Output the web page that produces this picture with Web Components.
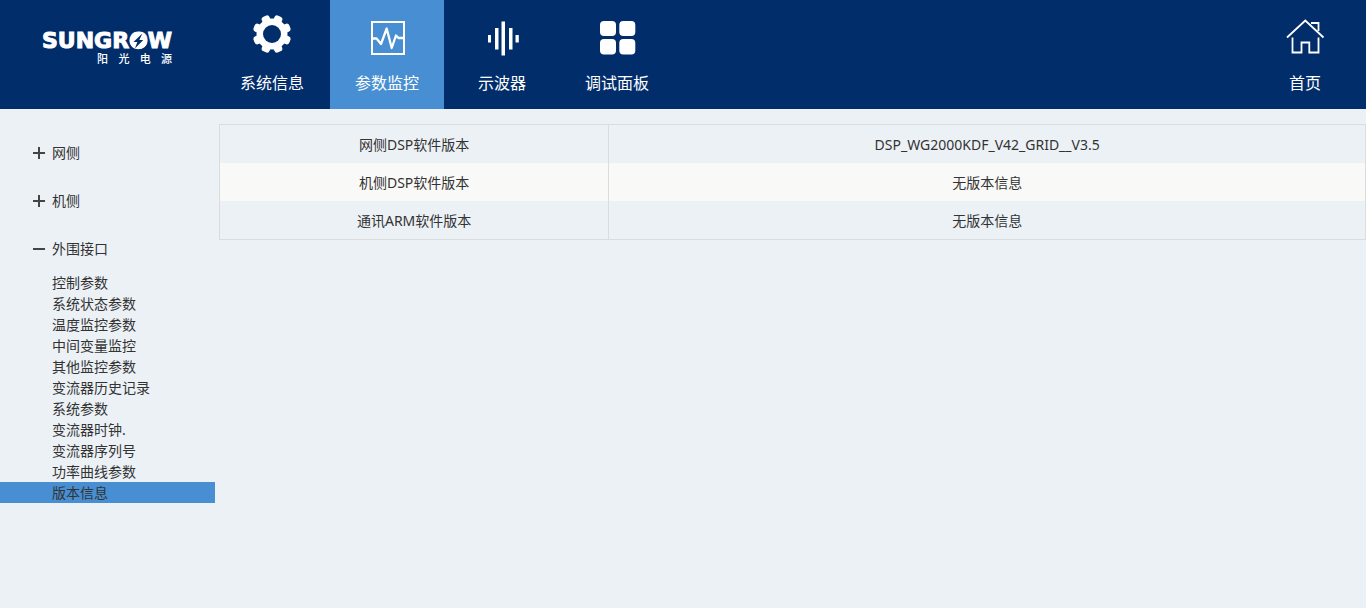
<!DOCTYPE html>
<html lang="zh-CN">
<head>
<meta charset="utf-8">
<meta name="viewport" content="width=device-width, initial-scale=1">
<title>阳光电源 - 参数监控</title>
<style>
  :root {
    --navy: #012d6b;
    --blue: #478fd2;
    --page: #ecf1f6;
    --line: #dadcde;
    --text: #333;
  }
  body {
    margin: 0;
    background: var(--page);
    color: var(--text);
    font: 14px/21px "Noto Sans", "Noto Sans CJK SC", sans-serif;
  }
</style>
</head>
<body>
<sg-app></sg-app>

<script>
const define = (name, html) => {
  const template = document.createElement('template');
  template.innerHTML = html;
  customElements.define(name, class extends HTMLElement {
    constructor() {
      super();
      this.attachShadow({ mode: 'open' }).append(template.content.cloneNode(true));
    }
  });
};

/* Brand mark: word, bolt inside the O, Chinese name below */
define('sg-logo', `
  <style>
    :host { display: block; color: #fff; }
    a { display: flex; flex-direction: column; width: max-content; color: inherit; text-decoration: none; }
    .word { font: bold 22px/24px "DejaVu Sans", sans-serif; -webkit-text-stroke: 1px #fff; }
    .o { position: relative; display: inline-block; }
    svg { position: absolute; inset: 0; width: 100%; height: 100%; }
    .cn { align-self: flex-end; width: 75px; font-size: 11px; line-height: 12px; font-weight: 500; text-align-last: justify; }
  </style>
  <a href="#home">
    <span class="word">SUNGR<span class="o">O<svg viewBox="0 0 19 24" aria-hidden="true"><ellipse cx="9.5" cy="12" rx="9" ry="8.5" fill="#fff"/><path d="M13.500 4.500 4.500 13h4L6 19.500 14.500 11h-4z" fill="#012d6b"/></svg></span>W</span>
    <span class="cn">阳 光 电 源</span>
  </a>`);

/* Icon and label link of the top bar */
const icons = {
  gear: `<mask id="m"><rect x="-4" y="-4" width="48" height="48" fill="#fff"/><circle cx="20" cy="17" r="9"/></mask>
    <g mask="url(#m)" fill="#fff"><circle cx="20" cy="17" r="15.5"/>
    ${[22.5, 67.5, 112.5, 157.5].map(a => `<rect x="15.800" y="-2.300" width="8.400" height="38.600" rx="3" transform="rotate(${a} 20 17)"/>`).join('')}</g>`,
  pulse: `<g fill="none" stroke="#fff"><rect x="5" y="5" width="32" height="32" stroke-width="2"/>
    <path d="M5 21.500h4.500L14 27l5.700-15.500 5 19.500L29 18.500l2.500 2.500H37" stroke-width="2.300" stroke-linejoin="round"/></g>`,
  wave: `<path fill="#fff" d="M6 18h3v7.500H6zM13 11h3.500v21.500H13zM19.500 4.500h3.500v34h-3.500zM27 11h3.500v21.500H27zM33.500 18h3.300v7.500h-3.300z"/>`,
  grid: `<g fill="#fff"><rect x="3" y="4" width="16" height="15" rx="4"/><rect x="22.300" y="4" width="16" height="15" rx="4"/>
    <rect x="3" y="22" width="16" height="15.500" rx="4"/><rect x="22.300" y="22" width="16" height="15.500" rx="4"/></g>`,
  home: `<path fill="none" stroke="#fff" stroke-width="1.800" d="M2 20.500 20.300 3.500 38.500 20.500M7.500 20.500v15h9V25.500h7.800v10h9.200v-15M26 6h7.500v8"/>`
};
customElements.define('sg-nav-item', class extends HTMLElement {
  connectedCallback() {
    if (this.shadowRoot) return;
    const icon = this.getAttribute('icon');
    this.attachShadow({ mode: 'open' }).innerHTML = `
      <style>
        :host { display: block; width: 114px; color: #fff; }
        :host([active]) { background: var(--blue); }
        a { display: flex; flex-direction: column; align-items: center; gap: 14px; padding: 17px 0 14px;
            color: inherit; text-decoration: none; font-size: 16px; line-height: 24px; }
        svg { width: 40px; height: 40px; overflow: visible; }
      </style>
      <a href="#${icon}"><svg viewBox="0 0 40 40" aria-hidden="true">${icons[icon]}</svg><slot></slot></a>`;
  }
});

define('sg-topbar', `
  <style>
    :host { display: block; background: var(--navy); }
    header { display: grid; grid-template-columns: 215px 1fr auto; align-items: start; padding-right: 4px; }
    sg-logo { padding: 29px 0 0 42px; }
    nav { display: flex; gap: 1px; }
  </style>
  <header>
    <sg-logo></sg-logo>
    <nav>
      <sg-nav-item icon="gear">系统信息</sg-nav-item>
      <sg-nav-item icon="pulse" active>参数监控</sg-nav-item>
      <sg-nav-item icon="wave">示波器</sg-nav-item>
      <sg-nav-item icon="grid">调试面板</sg-nav-item>
    </nav>
    <sg-nav-item icon="home">首页</sg-nav-item>
  </header>`);

/* Collapsible group of the side menu */
customElements.define('sg-menu-group', class extends HTMLElement {
  connectedCallback() {
    if (this.shadowRoot) return;
    this.attachShadow({ mode: 'open' }).innerHTML = `
      <style>
        :host { display: block; }
        button { display: flex; align-items: center; gap: 7px; width: 100%; height: 48px; padding: 0 0 0 33px;
                 border: 0; background: none; color: inherit; font: inherit; text-align: left; cursor: pointer; }
        svg { width: 12px; height: 14px; stroke: #444; stroke-width: 2; }
        :host([open]) .v { display: none; }
        :host(:not([open])) .items { display: none; }
      </style>
      <button type="button"><svg viewBox="0 0 12 14" aria-hidden="true"><path d="M0 8h12"/><path class="v" d="M6 2v12"/></svg><slot name="title"></slot></button>
      <div class="items"><slot></slot></div>`;
    const button = this.shadowRoot.querySelector('button');
    const sync = () => button.setAttribute('aria-expanded', this.hasAttribute('open'));
    button.addEventListener('click', () => { this.toggleAttribute('open'); sync(); });
    sync();
  }
});

define('sg-menu-item', `
  <style>
    :host { display: block; }
    :host([active]) { background: var(--blue); }
    a { display: block; padding-left: 52px; color: inherit; text-decoration: none; }
  </style>
  <a href="#item"><slot></slot></a>`);

define('sg-sidebar', `
  <style>:host { display: block; padding-top: 19px; }</style>
  <nav>
    <sg-menu-group><span slot="title">网侧</span></sg-menu-group>
    <sg-menu-group><span slot="title">机侧</span></sg-menu-group>
    <sg-menu-group open><span slot="title">外围接口</span>
      <sg-menu-item>控制参数</sg-menu-item>
      <sg-menu-item>系统状态参数</sg-menu-item>
      <sg-menu-item>温度监控参数</sg-menu-item>
      <sg-menu-item>中间变量监控</sg-menu-item>
      <sg-menu-item>其他监控参数</sg-menu-item>
      <sg-menu-item>变流器历史记录</sg-menu-item>
      <sg-menu-item>系统参数</sg-menu-item>
      <sg-menu-item>变流器时钟.</sg-menu-item>
      <sg-menu-item>变流器序列号</sg-menu-item>
      <sg-menu-item>功率曲线参数</sg-menu-item>
      <sg-menu-item active>版本信息</sg-menu-item>
    </sg-menu-group>
  </nav>`);

define('sg-version-table', `
  <style>
    :host { display: block; }
    table { width: 100%; table-layout: fixed; border-collapse: separate; border-spacing: 0; border: 1px solid var(--line); }
    th, td { box-sizing: border-box; height: 38px; padding: 0; font-weight: normal; text-align: center; }
    th { width: 34%; border-right: 1px solid var(--line); }
    tr:nth-child(even) { background: #f9f9f7; }
  </style>
  <table>
    <tbody>
      <tr><th scope="row">网侧DSP软件版本</th><td>DSP_WG2000KDF_V42_GRID__V3.5</td></tr>
      <tr><th scope="row">机侧DSP软件版本</th><td>无版本信息</td></tr>
      <tr><th scope="row">通讯ARM软件版本</th><td>无版本信息</td></tr>
    </tbody>
  </table>`);

define('sg-app', `
  <style>
    :host { display: block; }
    .body { display: grid; grid-template-columns: 215px 1fr; column-gap: 4px; align-items: start; }
    main { padding-top: 15px; }
  </style>
  <sg-topbar></sg-topbar>
  <div class="body">
    <sg-sidebar></sg-sidebar>
    <main><sg-version-table></sg-version-table></main>
  </div>`);
</script>
</body>
</html>
